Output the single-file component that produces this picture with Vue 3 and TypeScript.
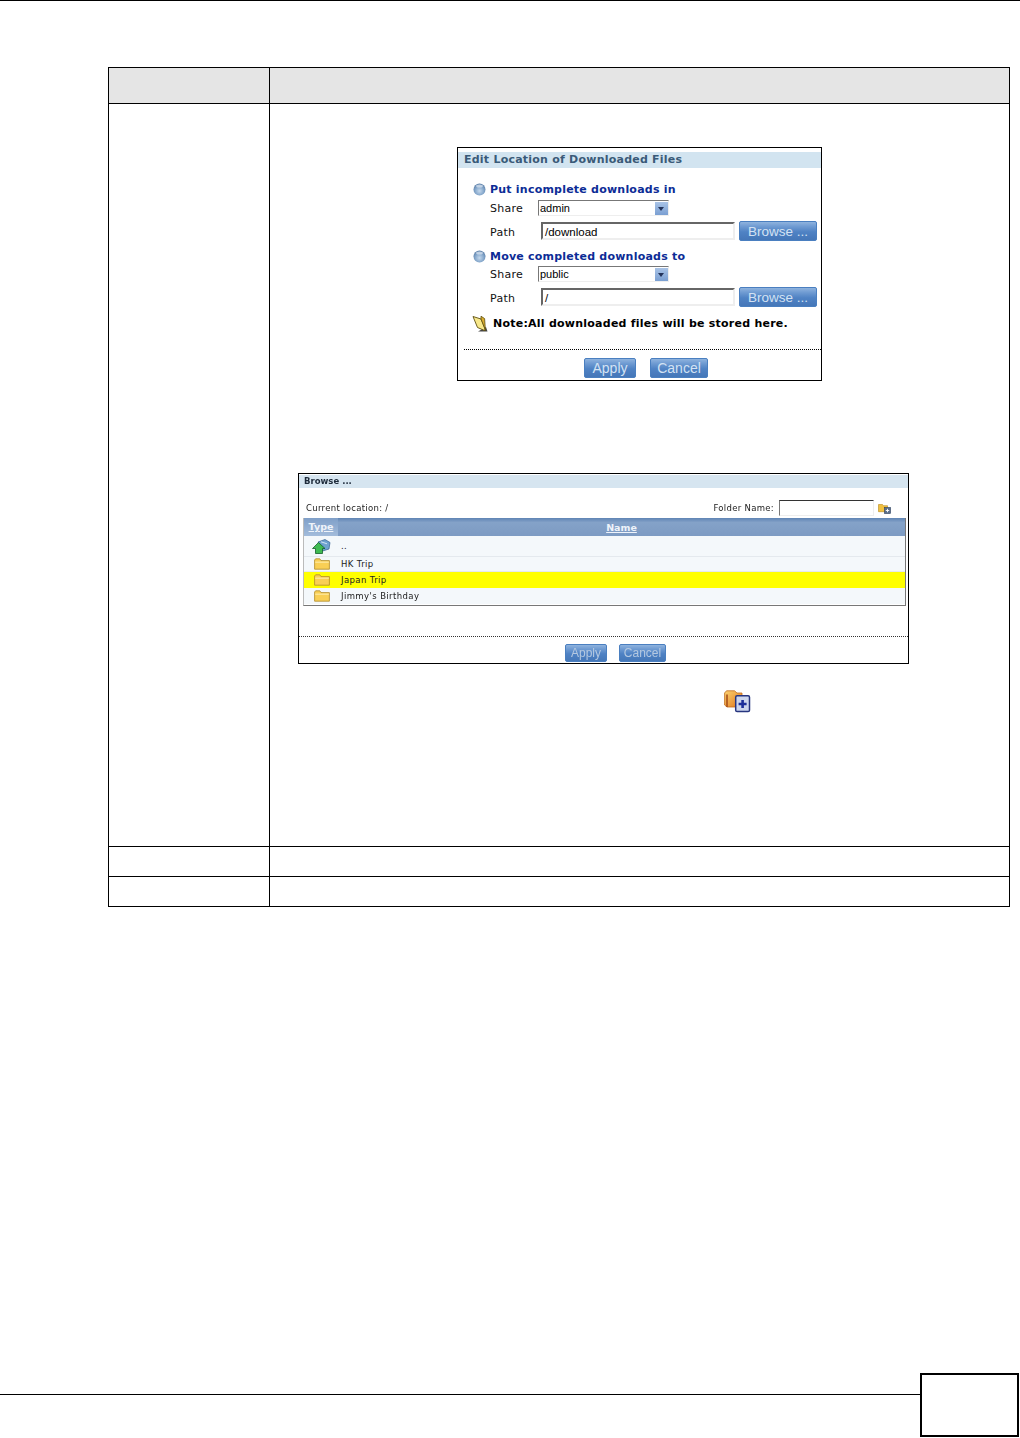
<template>
  <div class="page">
    <div class="top-rule"></div>

    <table class="doc-table">
      <colgroup>
        <col class="col-label" />
        <col />
      </colgroup>
      <thead>
        <tr class="head-row">
          <th></th>
          <th></th>
        </tr>
      </thead>
      <tbody>
        <tr class="main-row">
          <td></td>
          <td>
            <!-- first screenshot: download locations -->
            <div class="loc-dialog">
              <div class="loc-title">Edit Location of Downloaded Files</div>

              <template v-for="(sec, i) in sections" :key="sec.heading">
                <div class="sec-head" :class="{ first: i === 0 }">
                  <svg class="ball" width="13" height="13" viewBox="0 0 13 13">
                    <defs>
                      <radialGradient :id="'ball' + i" cx="50%" cy="62%" r="60%">
                        <stop offset="0" stop-color="#c4d8ec" />
                        <stop offset="0.6" stop-color="#86a8cc" />
                        <stop offset="1" stop-color="#5b7fa8" />
                      </radialGradient>
                    </defs>
                    <circle cx="6.5" cy="6.5" r="6" :fill="'url(#ball' + i + ')'" />
                    <ellipse cx="6.5" cy="3" rx="3.4" ry="1.5" fill="#eef4fa" opacity="0.6" />
                  </svg>
                  <span>{{ sec.heading }}</span>
                </div>
                <div class="field share-field">
                  <span class="field-label">Share</span>
                  <div class="select-box">
                    <span>{{ sec.share }}</span>
                    <i class="select-arrow"></i>
                  </div>
                </div>
                <div class="field path-field">
                  <span class="field-label">Path</span>
                  <div class="path-input">{{ sec.path }}</div>
                  <button class="blue-btn browse-btn">Browse ...</button>
                </div>
              </template>

              <div class="note">
                <svg width="16" height="17" viewBox="0 0 16 17">
                  <path d="M6 16.5h9.5L14 12z" fill="#444" />
                  <path d="M1 1.5L9 4l4 9.5v2.2L5.5 12.5z" fill="#f8e88a" stroke="#5c4e10" stroke-width="0.9" />
                  <path d="M9 4V1.2l3.6 2.4.8 11.6L9.4 5z" fill="#d8ab2c" stroke="#5c4e10" stroke-width="0.8" />
                </svg>
                <span>Note:All downloaded files will be stored here.</span>
              </div>

              <div class="loc-footer">
                <button class="blue-btn apply-btn">Apply</button>
                <button class="blue-btn cancel-btn">Cancel</button>
              </div>
            </div>

            <!-- second screenshot: folder browser -->
            <div class="browse-dialog">
              <div class="browse-title">Browse ...</div>
              <div class="browse-bar">
                <span>Current location: /</span>
                <span class="folder-name">
                  Folder Name:
                  <i class="folder-input"></i>
                  <svg width="13" height="11" viewBox="0 0 13 11">
                    <path d="M0.5 1.5h4l1 1.2h4v6h-9z" fill="#f0c040" stroke="#b98a1a" stroke-width="0.6" />
                    <rect x="6.5" y="4.5" width="6" height="6" fill="#5a6f8c" stroke="#2b3e5c" stroke-width="0.6" />
                    <path d="M9.5 5.8v3.4M7.8 7.5h3.4" stroke="#fff" stroke-width="0.9" />
                  </svg>
                </span>
              </div>

              <div class="file-table">
                <div class="file-head">
                  <span class="type-col">Type</span>
                  <span class="name-col">Name</span>
                </div>
                <div
                  v-for="row in files"
                  :key="row.name"
                  class="file-row"
                  :class="{ selected: row.selected, up: row.up }"
                >
                  <svg v-if="row.up" class="file-icon" width="19" height="15" viewBox="0 0 19 15">
                    <path d="M6 3l7-2.5 5 3-1 6.5-6.5 2z" fill="#6ea2cf" stroke="#2f5f8f" stroke-width="0.7" />
                    <path d="M9 2.8l6 2" stroke="#cfe3f3" stroke-width="1" />
                    <path d="M6.5 3.5L13 9.5h-2.5v5h-7v-5H0.5z" fill="#3fbb52" stroke="#14602a" stroke-width="0.8" />
                  </svg>
                  <svg v-else class="file-icon folder" width="16" height="12" viewBox="0 0 16 12">
                    <path d="M0.6 2v9.2h14.8V2.6H7L5.8 0.8H1.6z" fill="#f9cf55" stroke="#b08a2a" stroke-width="0.8" />
                    <path d="M1.2 4.2h13.6" stroke="#fde9a0" stroke-width="1.2" />
                  </svg>
                  <span class="file-name">{{ row.name }}</span>
                </div>
              </div>

              <div class="browse-footer">
                <button class="blue-btn small-apply">Apply</button>
                <button class="blue-btn small-cancel">Cancel</button>
              </div>
            </div>

            <!-- folder-with-plus icon sitting in the body copy -->
            <div class="inline-icon">
              <svg width="27" height="23" viewBox="0 0 27 23">
                <defs>
                  <linearGradient id="newFolder" x1="0" y1="0" x2="1" y2="1">
                    <stop offset="0" stop-color="#fbd271" />
                    <stop offset="1" stop-color="#e2761a" />
                  </linearGradient>
                </defs>
                <path d="M0.6 3L2.5 0.8h8L13 3h5v14H3L0.6 15z" fill="url(#newFolder)" stroke="#c06a1c" stroke-width="0.8" />
                <path d="M3 4.5V17" stroke="#a8501a" stroke-width="1.6" />
                <rect x="11.7" y="5.8" width="13.8" height="15.8" rx="1.4" fill="#ccd6ee" stroke="#27357f" stroke-width="1.5" />
                <path d="M18.6 10v8M14.6 14h8" stroke="#1c2f9a" stroke-width="2.6" />
              </svg>
            </div>
          </td>
        </tr>
        <tr class="plain-row">
          <td></td>
          <td></td>
        </tr>
        <tr class="plain-row">
          <td></td>
          <td></td>
        </tr>
      </tbody>
    </table>

    <footer class="page-foot">
      <div class="foot-rule"></div>
      <div class="page-box"></div>
    </footer>
  </div>
</template>

<script setup lang="ts">
interface LocationSection {
  heading: string;
  share: string;
  path: string;
}

interface FileRow {
  name: string;
  up?: boolean;
  selected?: boolean;
}

const sections: LocationSection[] = [
  { heading: 'Put incomplete downloads in', share: 'admin', path: '/download' },
  { heading: 'Move completed downloads to', share: 'public', path: '/' },
];

const files: FileRow[] = [
  { name: '..', up: true },
  { name: 'HK Trip' },
  { name: 'Japan Trip', selected: true },
  { name: "Jimmy's Birthday" },
];
</script>

<style>
html,
body {
  margin: 0;
  background: #fff;
}
</style>

<style scoped>
.page {
  width: 1020px;
  height: 1438px;
  display: flex;
  flex-direction: column;
  overflow: hidden;
  background: #fff;
  font-family: "DejaVu Sans", Verdana, sans-serif;
  color: #000;
}

.top-rule {
  height: 1px;
  background: #000;
}

.doc-table {
  width: 902px;
  margin: 66px 0 0 108px;
  border-collapse: collapse;
  table-layout: fixed;
}

.col-label {
  width: 161px;
}

.doc-table th,
.doc-table td {
  border: 1px solid #000;
  padding: 0;
  vertical-align: top;
}

.head-row th {
  height: 35px;
  background: #e5e5e5;
}

.main-row td {
  height: 742px;
}

.plain-row td {
  height: 29px;
}

/* first dialog */
.loc-dialog {
  width: 363px;
  height: 232px;
  margin: 43px auto 0;
  border: 1px solid #000;
  display: flex;
  flex-direction: column;
  font-size: 11px;
}

.loc-title {
  height: 16px;
  margin-top: 4px;
  padding-left: 6px;
  background: #d2e4f0;
  color: #3a5a78;
  font-weight: bold;
  font-size: 11px;
  line-height: 15px;
  letter-spacing: 0.23px;
}

.sec-head {
  display: flex;
  align-items: center;
  height: 14px;
  margin: 8px 0 0 15px;
  color: #0c2c96;
  font-weight: bold;
  letter-spacing: 0.22px;
}

.sec-head.first {
  margin-top: 14px;
  margin-bottom: 1px;
}

.ball {
  margin-right: 4px;
}

.field {
  display: flex;
  align-items: center;
  margin-left: 32px;
}

.field-label {
  width: 48px;
  color: #111;
  letter-spacing: 0.25px;
}

.share-field {
  height: 16px;
  margin-top: 3px;
}

.select-box {
  width: 128px;
  height: 14px;
  display: flex;
  align-items: center;
  justify-content: space-between;
  border: 1px solid #eee;
  border-top-color: #777;
  border-left-color: #777;
  font: 11px/14px "Liberation Sans", Arial, sans-serif;
  padding-left: 1px;
}

.select-arrow {
  width: 13px;
  height: 13px;
  background: linear-gradient(#a9c3e6, #7a9fd2);
  position: relative;
}

.select-arrow::after {
  content: "";
  position: absolute;
  left: 3px;
  top: 5px;
  border: 3.5px solid transparent;
  border-top: 4px solid #23335a;
  border-bottom: 0;
}

.path-field {
  height: 20px;
  margin-top: 5px;
}

.path-field .field-label {
  padding-top: 2px;
}

.path-input {
  width: 188px;
  height: 14px;
  margin-left: 3px;
  padding-left: 2px;
  border: 2px solid #eee;
  border-top-color: #666;
  border-left-color: #666;
  font: 11.5px/16px "Liberation Sans", Arial, sans-serif;
}

.blue-btn {
  display: block;
  padding: 0;
  border: 1px solid #4a7fc0;
  border-radius: 2px;
  background: linear-gradient(#8fb3de 0, #6f9bd2 25%, #4f82c4 55%, #4577b8 100%);
  color: #d3e2f3;
  font-family: "Liberation Sans", Arial, sans-serif;
  font-size: 14px;
  text-align: center;
}

.browse-btn {
  width: 78px;
  height: 20px;
  margin-left: 4px;
  padding-top: 2px;
  font-size: 13.5px;
  line-height: 16px;
}

.note {
  display: flex;
  align-items: center;
  height: 17px;
  margin: 8px 0 0 14px;
  font-weight: bold;
  letter-spacing: 0.24px;
}

.note svg {
  margin-right: 5px;
}

.loc-footer {
  margin: 17px 0 0 6px;
  padding-top: 8px;
  border-top: 1px dotted #000;
  display: flex;
  justify-content: flex-start;
}

.apply-btn {
  width: 52px;
  height: 20px;
  margin-left: 120px;
}

.cancel-btn {
  width: 58px;
  height: 20px;
  margin-left: 14px;
}

/* second dialog, a softer scan in the source */
.browse-dialog {
  width: 609px;
  height: 189px;
  margin: 92px 0 0 28px;
  border: 1px solid #000;
  display: flex;
  flex-direction: column;
  filter: blur(0.35px);
  font-size: 8.5px;
  color: #222;
}

.browse-title {
  height: 13px;
  margin-top: 1px;
  padding-left: 5px;
  background: #d6e5f0;
  font-weight: bold;
  font-size: 8.5px;
  line-height: 13px;
  color: #1d2a3a;
}

.browse-bar {
  display: flex;
  justify-content: space-between;
  align-items: center;
  height: 16px;
  margin-top: 12px;
  padding: 0 17px 0 7px;
  letter-spacing: 0.3px;
}

.folder-name {
  display: flex;
  align-items: center;
}

.folder-input {
  width: 93px;
  height: 14px;
  margin: 0 4px 0 5px;
  border: 1px solid #eee;
  border-top-color: #333;
  border-left-color: #777;
}

.file-table {
  width: 601px;
  height: 87px;
  margin: 2px 0 0 4px;
  border-right: 1px solid #777;
  border-left: 1px solid #bbb;
  border-bottom: 1px solid #777;
  background: #fff;
}

.file-head {
  height: 18px;
  display: flex;
  align-items: center;
  background: linear-gradient(#5f84b4 0, #84a2c8 25%, #7d9bc3 100%);
  color: #eef3fa;
  font-size: 9.5px;
  font-weight: bold;
  text-decoration: underline;
}

.type-col {
  width: 34px;
  height: 18px;
  line-height: 18px;
  text-align: center;
  background: linear-gradient(#7f9fc8, #a3bcdb);
}

.name-col {
  flex: 1;
  text-align: center;
}

.file-row {
  height: 16px;
  display: flex;
  align-items: center;
  background: #f4f8fb;
  border-bottom: 1px solid #e4e9ee;
  box-sizing: border-box;
  letter-spacing: 0.4px;
}

.file-row.up {
  height: 21px;
}

.file-row:nth-child(3) {
  height: 15px;
}

.file-row.selected {
  background: #ffff00;
  border-bottom: 0;
}

.file-row:last-child {
  border-bottom: 0;
}

.file-icon {
  margin-left: 8px;
}

.file-icon.folder {
  margin-left: 10px;
}

.file-name {
  margin-left: 11px;
}

.up .file-name {
  margin-left: 10px;
}

.browse-footer {
  margin-top: 30px;
  padding-top: 7px;
  border-top: 1px dotted #333;
  display: flex;
}

.small-apply {
  width: 42px;
  height: 18px;
  margin-left: 266px;
  color: #b4c8e0;
  font-size: 12px;
}

.small-cancel {
  width: 47px;
  height: 18px;
  margin-left: 12px;
  color: #b4c8e0;
  font-size: 12px;
}

.inline-icon {
  height: 23px;
  margin: 26px 0 0 454px;
}

/* running footer */
.page-foot {
  display: flex;
  align-items: flex-start;
  margin-top: auto;
  margin-bottom: 1px;
}

.foot-rule {
  flex: 1;
  height: 1px;
  margin-top: 21px;
  background: #000;
}

.page-box {
  width: 95px;
  height: 60px;
  border: 2px solid #000;
  margin-right: 1px;
}
</style>
